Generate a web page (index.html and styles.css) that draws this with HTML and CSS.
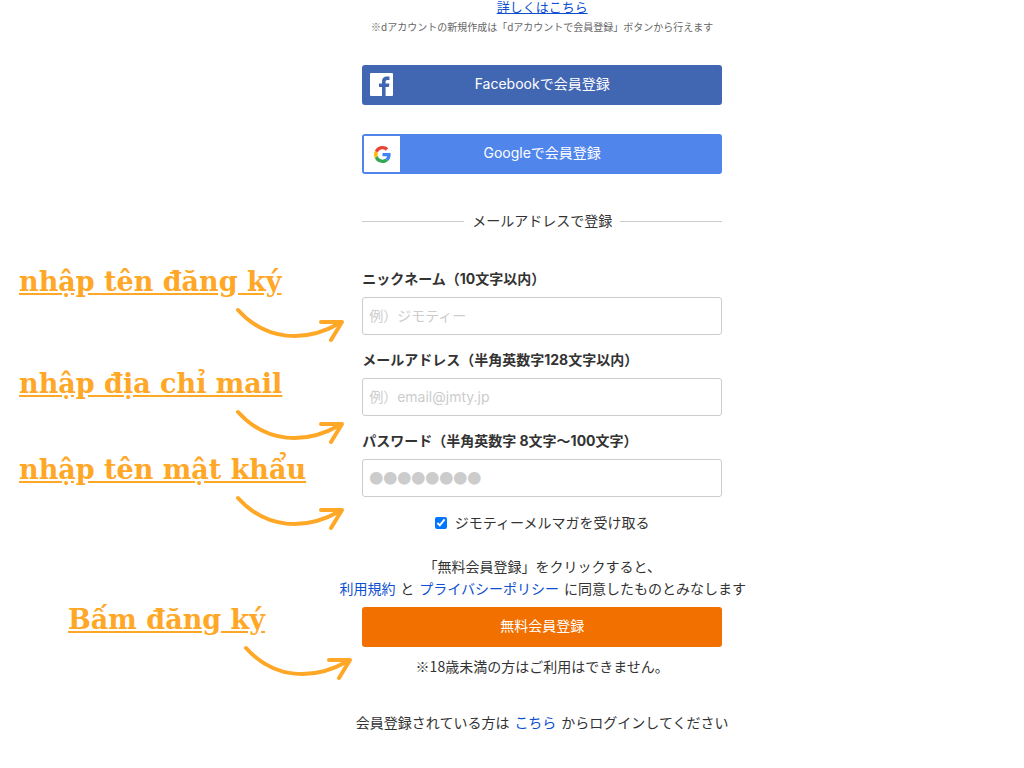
FILE: index.html
```html
<!DOCTYPE html>
<html lang="ja">
<head>
    <meta charset="UTF-8">
    <meta name="viewport" content="width=device-width, initial-scale=1.0">
    <title>会員登録</title>
    <link rel="stylesheet" href="styles.css">
</head>
<body>

<!-- arrow shared by all the notes -->
<svg class="sprite" aria-hidden="true">
    <symbol id="arrow" viewBox="0 0 110 40">
        <path d="M2 4C30 35 69 37 104 17M85 16L106 16L95 34" fill="none" stroke="#ffa726" stroke-width="4" stroke-linecap="round" stroke-linejoin="round"/>
    </symbol>
</svg>

<div class="page">
    <aside class="notes" lang="vi">
        <div class="note note-name">
            <p>nhập tên đăng ký</p>
            <svg class="arrow"><use href="#arrow"/></svg>
        </div>
        <div class="note">
            <p>nhập địa chỉ mail</p>
            <svg class="arrow"><use href="#arrow"/></svg>
        </div>
        <div class="note">
            <p>nhập tên mật khẩu</p>
            <svg class="arrow"><use href="#arrow"/></svg>
        </div>
        <div class="note note-submit">
            <p>Bấm đăng ký</p>
            <svg class="arrow"><use href="#arrow"/></svg>
        </div>
    </aside>

    <main class="register">
        <p class="details"><a href="#">詳しくはこちら</a></p>
        <p class="small">※dアカウントの新規作成は「dアカウントで会員登録」ボタンから行えます</p>

        <button type="button" class="btn facebook">
            <svg class="facebook-icon" viewBox="0 0 23 23">
                <rect width="23" height="23" rx="1" fill="#fff"/>
                <path d="M12 23V14H9V10.500H12V8.500C12 5 14 3.500 17 3.500H19.500V7H17.500C16 7 15.600 7.700 15.600 8.800V10.500H19.400L18.900 14H15.600V23Z" fill="#4267b2"/>
            </svg>
            Facebookで会員登録
        </button>
        <button type="button" class="btn google">
            <span class="google-icon">
                <svg viewBox="0 0 48 48">
                    <path fill="#ea4335" d="M24 9.500c3.540 0 6.710 1.220 9.210 3.600l6.850-6.850C35.900 2.380 30.470 0 24 0 14.620 0 6.510 5.380 2.560 13.220l7.980 6.190C12.430 13.720 17.740 9.500 24 9.500z"/>
                    <path fill="#4285f4" d="M46.980 24.550c0-1.570-.15-3.090-.38-4.550H24v9.020h12.940c-.58 2.960-2.260 5.480-4.780 7.180l7.730 6c4.510-4.180 7.090-10.360 7.090-17.650z"/>
                    <path fill="#fbbc05" d="M10.530 28.590c-.48-1.450-.76-2.990-.76-4.590s.27-3.140.76-4.590l-7.980-6.190C.92 16.460 0 20.120 0 24c0 3.880.92 7.540 2.560 10.780l7.970-6.190z"/>
                    <path fill="#34a853" d="M24 48c6.480 0 11.930-2.130 15.890-5.810l-7.730-6c-2.150 1.450-4.920 2.300-8.160 2.300-6.260 0-11.570-4.220-13.470-9.910l-7.980 6.190C6.510 42.620 14.620 48 24 48z"/>
                </svg>
            </span>
            Googleで会員登録
        </button>

        <div class="divider">メールアドレスで登録</div>

        <form>
            <div class="field">
                <label for="nickname">ニックネーム（10文字以内）</label>
                <input type="text" id="nickname" placeholder="例）ジモティー">
            </div>
            <div class="field">
                <label for="email">メールアドレス（半角英数字128文字以内）</label>
                <input type="email" id="email" placeholder="例）email@jmty.jp">
            </div>
            <div class="field">
                <label for="password">パスワード（半角英数字 8文字〜100文字）</label>
                <input type="password" id="password" placeholder="●●●●●●●●">
            </div>
            <div class="magazine">
                <input type="checkbox" id="magazine" checked>
                <label for="magazine">ジモティーメルマガを受け取る</label>
            </div>
            <p class="terms">
                「無料会員登録」をクリックすると、<br>
                <a href="#">利用規約</a> と <a href="#">プライバシーポリシー</a> に同意したものとみなします
            </p>
            <button type="submit" class="btn submit">無料会員登録</button>
        </form>

        <p class="age">※18歳未満の方はご利用はできません。</p>
        <p class="login">会員登録されている方は <a href="#">こちら</a> からログインしてください</p>
    </main>
</div>

</body>
</html>
```

FILE: styles.css
```css
* {
    box-sizing: border-box;
}
body {
    margin: 0;
    background-color: white;
    color: #333;
    font-family: Inter, "Noto Sans CJK JP", sans-serif;
    font-size: 14px;
    line-height: 22px;
}
p {
    margin: 0;
}
a {
    color: #0d4fd0;
    text-decoration: none;
}
.sprite {
    display: none;
}
.page {
    display: grid;
    grid-template-columns: 6fr 360px 5fr;
}

/* notes on the left */
.notes {
    padding: 262px 16px 0 19px;
}
.note {
    display: flex;
    flex-direction: column;
    height: 86px;
    color: #ffa726;
    font-family: "DejaVu Serif", serif;
    font-size: 27px;
    font-weight: bold;
    line-height: 40px;
    text-decoration: underline;
    white-space: nowrap;
}
.note-name {
    margin-bottom: 16px;
}
.note-submit {
    margin: 64px -8px 0 49px;
}
.arrow {
    align-self: flex-end;
    width: 110px;
    height: 40px;
    margin-top: 4px;
}

/* registration form */
.register {
    text-align: center;
    white-space: nowrap;
}
.details {
    font-size: 13px;
    line-height: 14px;
}
.details a {
    text-decoration: underline;
}
.small {
    margin: 3px 0 28px;
    color: #666;
    font-size: 10px;
    line-height: 20px;
}
.small,
.age {
    font-family: "Noto Sans CJK JP", sans-serif;
}
.btn {
    display: flex;
    position: relative;
    align-items: center;
    justify-content: center;
    width: 100%;
    height: 40px;
    padding: 0 0 2px;
    border: none;
    border-radius: 3px;
    color: white;
    font: inherit;
    cursor: pointer;
}
.facebook {
    background-color: #4267b2;
}
.facebook-icon {
    position: absolute;
    top: 8px;
    left: 8px;
    width: 23px;
    height: 23px;
}
.google {
    margin-top: 29px;
    background-color: #5085ec;
}
.google-icon {
    display: flex;
    position: absolute;
    top: 2px;
    left: 2px;
    align-items: center;
    justify-content: center;
    width: 36px;
    height: 36px;
    background-color: white;
}
.google-icon svg {
    width: 17px;
    height: 17px;
}
.divider {
    display: flex;
    align-items: center;
    gap: 8px;
    margin: 36px 0;
}
.divider::before,
.divider::after {
    content: "";
    flex: 1;
    height: 1px;
    background-color: #ccc;
}
.field {
    margin-bottom: 14px;
    text-align: left;
}
.field label {
    display: block;
    margin-bottom: 7px;
    font-weight: bold;
}
.field input {
    display: block;
    width: 100%;
    height: 38px;
    padding: 0 6px 2px;
    border: 1px solid #ccc;
    border-radius: 3px;
    font: inherit;
}
.field input::placeholder {
    color: #ccc;
}
.field input[type="password"] {
    font-family: "Noto Sans CJK JP", sans-serif;
}
.magazine {
    display: flex;
    align-items: center;
    justify-content: center;
    gap: 8px;
    margin-top: 15px;
}
.magazine input {
    width: 12px;
    height: 12px;
    margin: 0;
}
.terms {
    margin: 22px -30px 7px;
}
.terms a,
.login a {
    margin: 0 1px;
}
.submit {
    background-color: #f27000;
}
.age {
    margin: 8px 0 35px;
}
.login {
    margin: 0 -30px;
    padding-bottom: 34px;
}
```
